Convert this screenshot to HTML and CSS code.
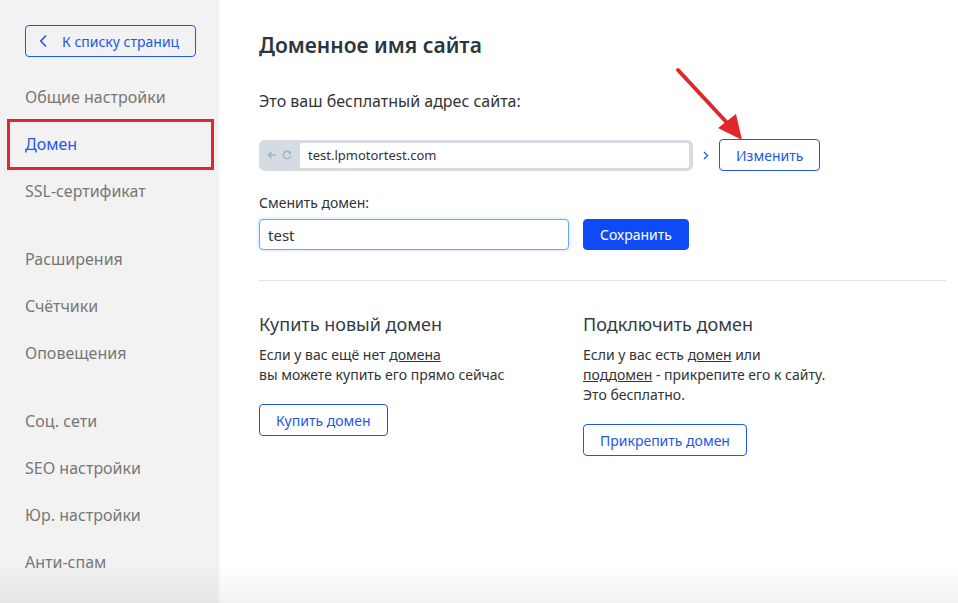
FILE: index.html
```html
<!DOCTYPE html>
<html lang="ru">
<head>
    <meta charset="UTF-8">
    <meta name="viewport" content="width=device-width, initial-scale=1.0">
    <title>Доменное имя сайта</title>
    <link rel="stylesheet" href="styles.css">
</head>
<body>
    <aside class="sidebar">
        <a href="#" class="back-btn">
            <svg width="9" height="14" viewBox="0 0 9 14"><path d="M7 1.5 L1.8 7 L7 12.5" fill="none" stroke="currentColor" stroke-width="1.6"/></svg>
            <span>К списку страниц</span>
        </a>

        <nav class="menu">
            <div class="menu-group">
                <a href="#" class="menu-item">Общие настройки</a>
                <a href="#" class="menu-item active">Домен</a>
                <a href="#" class="menu-item">SSL-сертификат</a>
            </div>
            <div class="menu-group">
                <a href="#" class="menu-item">Расширения</a>
                <a href="#" class="menu-item">Счётчики</a>
                <a href="#" class="menu-item">Оповещения</a>
            </div>
            <div class="menu-group">
                <a href="#" class="menu-item">Соц. сети</a>
                <a href="#" class="menu-item">SEO настройки</a>
                <a href="#" class="menu-item">Юр. настройки</a>
                <a href="#" class="menu-item">Анти-спам</a>
            </div>
        </nav>
    </aside>

    <main class="content">
        <h1>Доменное имя сайта</h1>

        <p class="lead">Это ваш бесплатный адрес сайта:</p>

        <div class="address-row">
            <div class="browser-bar">
                <span class="bar-icons">
                    <svg width="10" height="10" viewBox="0 0 10 10"><path d="M9 5 H2 M4.5 2 L1.5 5 L4.5 8" fill="none" stroke="#a9b3bf" stroke-width="1.6"/></svg>
                    <svg width="10" height="10" viewBox="0 0 10 10"><path d="M8.3 3.2 A3.7 3.7 0 1 0 8.6 6" fill="none" stroke="#a9b3bf" stroke-width="1.5"/><path d="M9 1 V4 H6 Z" fill="#a9b3bf"/></svg>
                </span>
                <span class="bar-url">test.lpmotortest.com</span>
            </div>
            <span class="chevron">
                <svg width="6" height="9" viewBox="0 0 6 9"><path d="M1 1 L4.5 4.5 L1 8" fill="none" stroke="#2456e8" stroke-width="1.3"/></svg>
            </span>
            <button class="btn btn-outline">Изменить</button>
        </div>

        <label class="field-label" for="domain">Сменить домен:</label>
        <div class="field-row">
            <input type="text" id="domain" value="test">
            <button class="btn btn-primary">Сохранить</button>
        </div>

        <hr class="divider">

        <div class="columns">
            <div class="col">
                <h3>Купить новый домен</h3>
                <p>Если у вас ещё нет <u>домена</u><br>вы можете купить его прямо сейчас</p>
                <button class="btn btn-outline">Купить домен</button>
            </div>
            <div class="col">
                <h3>Подключить домен</h3>
                <p>Если у вас есть <u>домен</u> или<br><u>поддомен</u> - прикрепите его к сайту.<br>Это бесплатно.</p>
                <button class="btn btn-outline">Прикрепить домен</button>
            </div>
        </div>

        <!-- стрелка-подсказка -->
        <svg class="hint-arrow" width="80" height="80" viewBox="0 0 80 80">
            <path d="M4 4 L56 60" stroke="#e0282b" stroke-width="4" stroke-linecap="round"/>
            <path d="M44 62 L68 74 L62 48 Z" fill="#e0282b"/>
        </svg>
    </main>

    <div class="bottom-shade"></div>
</body>
</html>
```

FILE: styles.css
```css
* {
    box-sizing: border-box;
}
body {
    margin: 0;
    height: 603px;
    overflow: hidden;
    display: flex;
    font-family: "Noto Sans", "Open Sans", Arial, sans-serif;
    color: #333;
    background-color: #fff;
    position: relative;
}
a {
    text-decoration: none;
}

/* боковое меню */
.sidebar {
    width: 219px;
    flex-shrink: 0;
    background-color: #f2f2f2;
    padding-top: 25px;
}
.back-btn {
    display: flex;
    align-items: center;
    gap: 14px;
    margin-left: 25px;
    width: 171px;
    height: 32px;
    padding-left: 13px;
    border: 1px solid #1f55f0;
    border-radius: 4px;
    color: #2456e8;
    font-size: 14px;
}
.menu {
    margin-top: 17px;
}
.menu-group {
    margin-bottom: 21px;
}
.menu-item {
    display: block;
    position: relative;
    height: 47px;
    line-height: 47px;
    padding-left: 25px;
    font-size: 16px;
    color: #777;
}
.menu-item.active {
    color: #2456e8;
}
.menu-item.active::before {
    content: "";
    position: absolute;
    left: 7px;
    right: 5px;
    top: -2px;
    bottom: -2px;
    border: 3px solid #e0282b;
}

/* основная часть */
.content {
    flex: 1;
    position: relative;
    padding: 30px 12px 0 40px;
}
h1 {
    margin: 0;
    font-size: 21px;
    line-height: 30px;
    font-weight: 600;
    color: #2b3640;
}
.lead {
    margin: 30px 0 0;
    font-size: 16px;
    line-height: 22px;
}
.address-row {
    display: flex;
    align-items: center;
    margin-top: 27px;
    height: 32px;
}
.browser-bar {
    width: 434px;
    height: 31px;
    display: flex;
    align-items: center;
    padding: 3px 4px 3px 8px;
    background-color: #d4dbe3;
    border-radius: 6px;
}
.bar-icons {
    display: flex;
    gap: 5px;
    width: 33px;
}
.bar-url {
    flex: 1;
    height: 25px;
    line-height: 25px;
    padding-left: 8px;
    background-color: #fff;
    border-radius: 2px;
    font-size: 13px;
}
.chevron {
    width: 26px;
    display: flex;
    justify-content: center;
}
.btn {
    height: 32px;
    padding: 0 16px;
    border-radius: 4px;
    font-family: inherit;
    font-size: 14px;
    cursor: pointer;
}
.btn-outline {
    background-color: #fff;
    border: 1px solid #1f55f0;
    color: #2456e8;
}
.address-row .btn-outline {
    width: 101px;
}
.btn-primary {
    background-color: #0f4bf5;
    border: 1px solid #0f4bf5;
    color: #fff;
    width: 106px;
}
.field-label {
    display: block;
    margin-top: 22px;
    font-size: 14px;
    line-height: 20px;
}
.field-row {
    display: flex;
    gap: 14px;
    margin-top: 6px;
}
.field-row input {
    width: 310px;
    height: 31px;
    padding: 0 8px;
    border: 1px solid #6aa7f0;
    border-radius: 4px;
    box-shadow: 0 0 4px rgba(80,150,240,0.35);
    font-family: inherit;
    font-size: 15px;
    color: #333;
}
.field-row .btn {
    height: 31px;
}
.divider {
    margin: 30px 0 0;
    border: none;
    border-top: 1px solid #dde4ea;
}
.columns {
    display: flex;
    margin-top: 30px;
}
.col {
    width: 324px;
}
.col h3 {
    margin: 0;
    font-size: 18px;
    line-height: 26px;
    font-weight: 400;
    color: #333c44;
}
.col p {
    margin: 8px 0 19px;
    font-size: 14px;
    line-height: 20px;
}
.hint-arrow {
    position: absolute;
    left: 455px;
    top: 66px;
}
.bottom-shade {
    position: absolute;
    left: 0;
    right: 0;
    bottom: 0;
    height: 40px;
    background: linear-gradient(rgba(0,0,0,0), rgba(0,0,0,0.05));
    pointer-events: none;
}
```
